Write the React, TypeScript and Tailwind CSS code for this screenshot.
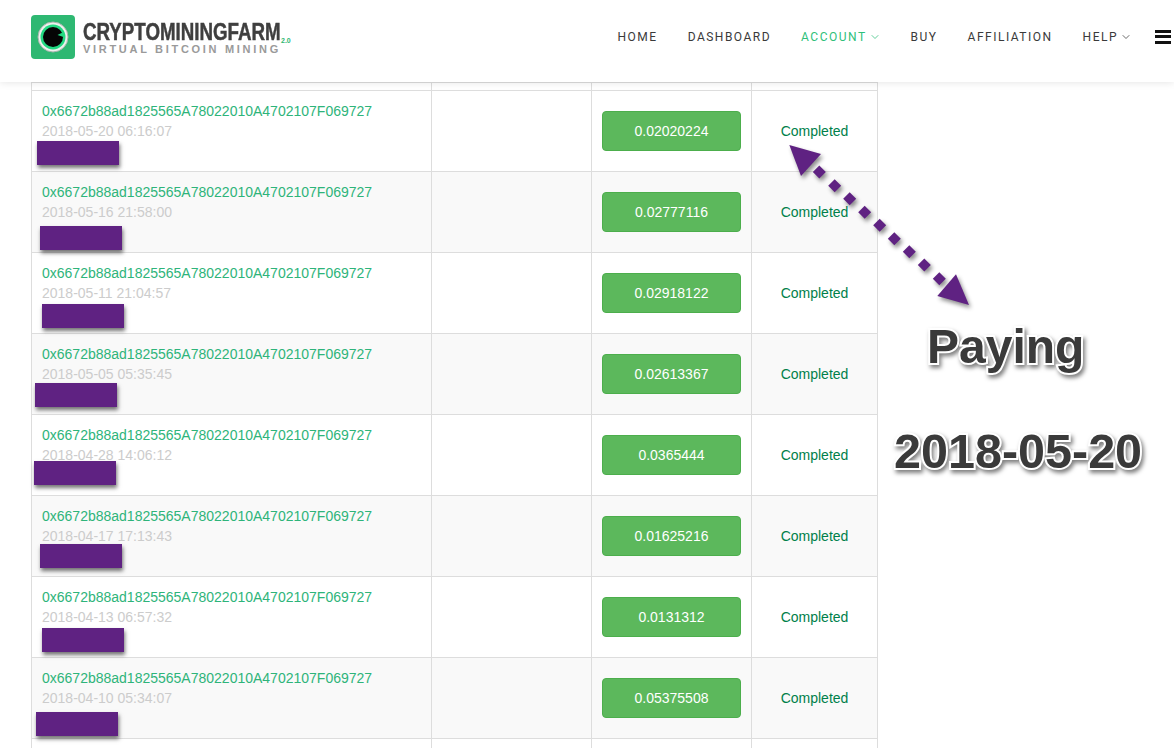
import { ChevronDown } from 'lucide-react';

const rows = [
  { date: '2018-05-20 06:16:07', amount: '0.02020224', mask: 'left-[5px] top-[50px]' },
  { date: '2018-05-16 21:58:00', amount: '0.02777116', mask: 'left-[8px] top-[54px]' },
  { date: '2018-05-11 21:04:57', amount: '0.02918122', mask: 'left-[10px] top-[51px]' },
  { date: '2018-05-05 05:35:45', amount: '0.02613367', mask: 'left-[3px] top-[49px]' },
  { date: '2018-04-28 14:06:12', amount: '0.0365444', mask: 'left-[2px] top-[46px]' },
  { date: '2018-04-17 17:13:43', amount: '0.01625216', mask: 'left-[8px] top-[48px]' },
  { date: '2018-04-13 06:57:32', amount: '0.0131312', mask: 'left-[10px] top-[51px]' },
  { date: '2018-04-10 05:34:07', amount: '0.05375508', mask: 'left-[4px] top-[54px]' },
];

const cell = 'border border-[#ddd] align-middle p-0';

// dots between the two arrow heads
const dots = [
  [819.3, 172],
  [834.7, 185.7],
  [849.7, 198.7],
  [864.7, 212.3],
  [879.7, 225.3],
  [894.3, 238.7],
  [909.3, 251.7],
  [924.3, 265],
  [939.3, 278.7],
];

function Logo() {
  return (
    <div className="flex items-center gap-2">
      <div className="flex h-11 w-11 items-center justify-center rounded-sm bg-[#2eb872]">
        <svg width="34" height="34" viewBox="0 0 34 34">
          <circle cx="17" cy="17" r="15" fill="#eef2ee" stroke="#a9b3ae" strokeWidth="1" />
          <circle cx="17" cy="17" r="12.5" fill="#22d982" />
          <circle cx="17" cy="17" r="10" fill="#050505" />
          <path d="M21.5 15 L27.5 12 L27.5 17 Z" fill="#22d982" />
        </svg>
      </div>
      <div className="relative w-[197px] font-['Liberation_Sans',sans-serif] leading-none">
        <div className="origin-left scale-x-[0.78] whitespace-nowrap text-[24px] font-bold text-[#3f3f3f] [-webkit-text-stroke:0.5px_#3f3f3f]">
          CRYPTOMININGFARM
        </div>
        <div className="whitespace-nowrap text-[11px] font-bold tracking-[2.7px] text-[#9a9a9a]">
          VIRTUAL BITCOIN MINING
        </div>
        <span className="absolute left-[198px] top-[17px] text-[7px] font-bold text-[#2eb872]">2.0</span>
      </div>
    </div>
  );
}

function NavItem({ label, active, menu }: { label: string; active?: boolean; menu?: boolean }) {
  return (
    <a className={`flex items-center gap-[2px] ${active ? 'text-[#2fbf7a]' : 'text-[#3a3a3a]'}`}>
      {label}
      {menu && <ChevronDown size={12} strokeWidth={1.5} />}
    </a>
  );
}

export default function App() {
  return (
    <div className="relative h-[748px] w-[1174px] overflow-hidden bg-white font-['Liberation_Sans',sans-serif] text-sm">
      <header className="relative z-10 flex h-[82px] bg-white pl-[31px] pr-[3px] pt-[15px] shadow-[0_0_8px_rgba(0,0,0,0.12)]">
        <div className="h-11">
          <Logo />
        </div>
        <nav className="ml-auto flex h-[45px] items-center gap-[30px] font-['Roboto',sans-serif] text-[12px] tracking-[1.5px]">
          <NavItem label="HOME" />
          <NavItem label="DASHBOARD" />
          <NavItem label="ACCOUNT" active menu />
          <NavItem label="BUY" />
          <NavItem label="AFFILIATION" />
          <NavItem label="HELP" menu />
          <div className="ml-[-7px] flex w-4 flex-col gap-[2.5px] pb-[2px]">
            <span className="h-[3px] bg-[#111]" />
            <span className="h-[3px] bg-[#111]" />
            <span className="h-[3px] bg-[#111]" />
          </div>
        </nav>
      </header>

      <table className="ml-[31px] w-[846px] table-fixed border-collapse">
        <colgroup>
          <col className="w-[400px]" />
          <col className="w-[160px]" />
          <col className="w-[160px]" />
          <col className="w-[126px]" />
        </colgroup>
        <tbody>
          <tr className="h-[8px]">
            <td className={cell} />
            <td className={cell} />
            <td className={cell} />
            <td className={cell} />
          </tr>
          {rows.map((row, idx) => (
            <tr key={row.date} className={`h-[81px] ${idx % 2 === 1 ? 'bg-[#f9f9f9]' : 'bg-white'}`}>
              <td className={`${cell} relative !align-top px-[10px] py-[10px] leading-5`}>
                <div className="text-[#2eb47a]">0x6672b88ad1825565A78022010A4702107F069727</div>
                <div className="text-[#ccc]">{row.date}</div>
                <div className={`absolute h-6 w-[82px] bg-[#5f2282] shadow-[1px_3px_4px_rgba(0,0,0,0.55)] ${row.mask}`} />
              </td>
              <td className={cell} />
              <td className={`${cell} px-[10px]`}>
                <div className="flex h-10 items-center justify-center rounded border border-[#4cae4c] bg-[#5cb85c] text-white">
                  {row.amount}
                </div>
              </td>
              <td className={`${cell} text-center text-[#00804a]`}>Completed</td>
            </tr>
          ))}
          <tr className="h-[81px]">
            <td className={cell} />
            <td className={cell} />
            <td className={cell} />
            <td className={cell} />
          </tr>
        </tbody>
      </table>

      {/* annotation drawn over the table */}
      <svg
        className="absolute left-0 top-0 z-20 drop-shadow-[2px_3px_2px_rgba(0,0,0,0.45)]"
        width="1174"
        height="748"
        viewBox="0 0 1174 748"
      >
        <polygon points="789.3,145 821,154 801,176" fill="#5f2282" />
        {dots.map(([x, y]) => (
          <polygon key={x} points={`${x},${y - 6.5} ${x + 6.5},${y} ${x},${y + 6.5} ${x - 6.5},${y}`} fill="#5f2282" />
        ))}
        <polygon points="956,274.3 969,305 937.3,296" fill="#5f2282" />
      </svg>
      <div className="absolute left-[927px] top-[320px] z-20 whitespace-nowrap text-[48px] font-bold leading-[54px] text-[#3a3a3a] [-webkit-text-stroke:4px_white] [paint-order:stroke_fill] drop-shadow-[2px_3px_2px_rgba(0,0,0,0.5)]">
        Paying
      </div>
      <div className="absolute left-[894px] top-[424px] z-20 whitespace-nowrap text-[48.5px] font-bold leading-[54px] text-[#3a3a3a] [-webkit-text-stroke:4px_white] [paint-order:stroke_fill] drop-shadow-[2px_3px_2px_rgba(0,0,0,0.5)]">
        2018-05-20
      </div>
    </div>
  );
}
